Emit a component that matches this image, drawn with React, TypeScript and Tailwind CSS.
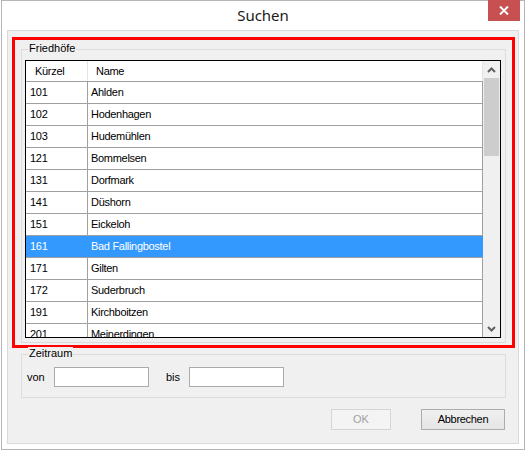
import React from "react";

const rows: [string, string][] = [
  ["101", "Ahlden"],
  ["102", "Hodenhagen"],
  ["103", "Hudemühlen"],
  ["121", "Bommelsen"],
  ["131", "Dorfmark"],
  ["141", "Düshorn"],
  ["151", "Eickeloh"],
  ["161", "Bad Fallingbostel"],
  ["171", "Gilten"],
  ["172", "Suderbruch"],
  ["191", "Kirchboitzen"],
  ["201", "Meinerdingen"],
];

const SELECTED = "161";

function Chevron({ up }: { up?: boolean }) {
  return (
    <svg width="9" height="6" viewBox="0 0 9 6">
      <path
        d={up ? "M1 5 L4.5 1.5 L8 5" : "M1 1 L4.5 4.5 L8 1"}
        fill="none"
        stroke="#606060"
        strokeWidth="2"
      />
    </svg>
  );
}

export default function App() {
  return (
    <div className="w-[526px] h-[451px] bg-white text-[11px] text-black" style={{ fontFamily: '"Liberation Sans", Arial, sans-serif' }}>
      <div className="relative ml-px w-[524px] h-[450px] border border-[#b5b5b5] bg-white px-[5px] pb-[5px] flex flex-col">
        {/* title bar */}
        <div className="h-[29px] flex items-center justify-center">
          <span className="text-[15px] text-[#1a1a1a] pb-[1px]" style={{ fontFamily: '"Noto Sans", "Open Sans", sans-serif' }}>
            Suchen
          </span>
        </div>
        <button className="absolute top-[-1px] right-[4px] w-[32px] h-[21px] bg-[#c75050] flex items-center justify-center">
          <svg width="10" height="9" viewBox="0 0 10 9">
            <path d="M1 0.5 L9 8.5 M9 0.5 L1 8.5" stroke="white" strokeWidth="2" />
          </svg>
        </button>

        {/* client area */}
        <div className="flex-1 border border-[#d9d9d9] bg-[#f0f0f0] flex flex-col">
          <div className="mt-[6px] ml-[4px] mr-[3px] h-[311px] border-[3px] border-[#ff0000]">
            <div className="relative mt-[9px] mx-[6px] h-[294px] border border-[#dcdcdc]">
              <span className="absolute top-[-8px] left-[6px] px-px bg-[#f0f0f0] leading-[13px]">Friedhöfe</span>
              <div className="mt-[10px] ml-[3px] mr-[4px] h-[278px] border border-black bg-white flex overflow-hidden">
                <div className="flex-1 flex flex-col tracking-[-0.3px]">
                  <div className="h-[21px] shrink-0 flex border-b border-[#a0a0a0] bg-white">
                    <div className="w-[62px] border-r border-[#e3e3e3] pl-[9px] pt-[1px] flex items-center">Kürzel</div>
                    <div className="w-[395px] border-r border-[#e3e3e3] pl-[8px] pt-[1px] flex items-center">Name</div>
                  </div>
                  {rows.map(([code, name]) => {
                    const sel = code === SELECTED;
                    return (
                      <div
                        key={code}
                        className={`h-[22px] shrink-0 flex border-b border-[#a0a0a0] ${sel ? "bg-[#3399ff] text-white" : ""}`}
                      >
                        <div className={`w-[62px] border-r pl-[4px] flex items-center ${sel ? "border-[#3399ff]" : "border-[#a0a0a0]"}`}>
                          {code}
                        </div>
                        <div className={`w-[395px] border-r pl-[3px] flex items-center ${sel ? "border-[#3399ff]" : "border-[#a0a0a0]"}`}>
                          {name}
                        </div>
                      </div>
                    );
                  })}
                </div>
                <div className="w-[17px] shrink-0 bg-[#f0f0f0] flex flex-col">
                  <div className="h-[17px] flex items-center justify-center">
                    <Chevron up />
                  </div>
                  <div className="ml-px w-[15px] h-[78px] bg-[#cdcdcd]" />
                  <div className="flex-1" />
                  <div className="h-[17px] flex items-center justify-center">
                    <Chevron />
                  </div>
                </div>
              </div>
            </div>
          </div>

          {/* Zeitraum */}
          <div className="relative mt-[6px] ml-[13px] mr-[12px] h-[44px] border border-[#dcdcdc] pt-[12px] pl-[5px]">
            <span className="absolute top-[-8px] left-[6px] px-px bg-[#f0f0f0] leading-[13px]">Zeitraum</span>
            <div className="flex items-center h-[20px]">
              <span className="w-[27px]">von</span>
              <input className="w-[95px] h-[20px] border border-[#ababab] bg-white outline-none" />
              <span className="ml-[17px] w-[23px]">bis</span>
              <input className="w-[95px] h-[20px] border border-[#ababab] bg-white outline-none" />
            </div>
          </div>

          {/* buttons */}
          <div className="mt-[11px] pr-[13px] flex justify-end gap-[30px]">
            <button disabled className="w-[60px] h-[21px] border border-[#d5d5d5] bg-[#f4f4f4] text-[#a0a0a0] flex items-center justify-center">
              OK
            </button>
            <button className="w-[84px] h-[21px] border border-[#adadad] bg-gradient-to-b from-[#f0f0f0] to-[#e5e5e5] flex items-center justify-center tracking-[-0.3px]">
              Abbrechen
            </button>
          </div>
        </div>
      </div>
    </div>
  );
}
